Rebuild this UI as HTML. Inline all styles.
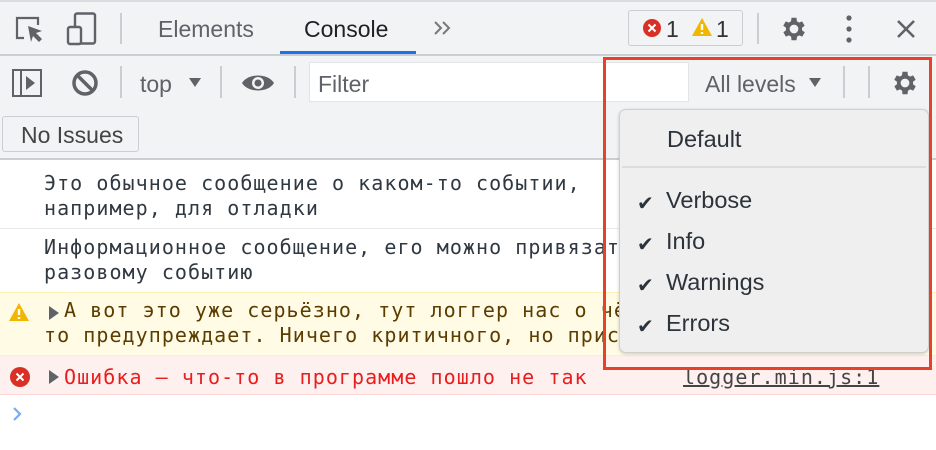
<!DOCTYPE html>
<html><head><meta charset="utf-8"><style>
*{box-sizing:border-box;margin:0;padding:0}
body{width:936px;height:450px;overflow:hidden;background:#fff;font-family:"Liberation Sans",sans-serif;position:relative;color:#333}
.abs{position:absolute}
.bar1{left:0;top:0;width:936px;height:56px;background:#f1f3f4;border-top:2px solid #dadce0;border-bottom:2px solid #cbcdd1}
.bar2{left:0;top:56px;width:936px;height:104px;background:#f1f3f4;border-bottom:2px solid #cbcdd1}
.sep{width:2px;background:#cbcdd1}
.t{font-size:23px;color:#5f6368}
.mono{font-family:"DejaVu Sans Mono",monospace;font-size:20px;letter-spacing:1.05px;line-height:25px;color:#303942}
.menu{font-size:23.5px;color:#2d333a}
.ck{position:absolute;left:-29px;top:4px;font-size:20px}
</style></head><body>
<div class="abs bar1"></div>
<div class="abs bar2"></div>
<svg class="abs" style="left:14px;top:14px" width="32" height="32" viewBox="0 0 32 32"><path d="M10 24H3V4h21v7" fill="none" stroke="#5f6368" stroke-width="2.2"/><path d="M14 12l14 5-6 2 6 6-3 3-6-6-2 6z" fill="#5f6368"/></svg>
<svg class="abs" style="left:66px;top:12px" width="34" height="34" viewBox="0 0 34 34"><rect x="9" y="1.5" width="20" height="30" rx="2" fill="none" stroke="#5f6368" stroke-width="2.4"/><rect x="2" y="15" width="13" height="17" rx="2" fill="#f1f3f4" stroke="#5f6368" stroke-width="2.4"/></svg>
<div class="abs sep" style="left:120px;top:13px;height:31px"></div>
<div class="abs t" style="left:158px;top:16px">Elements</div>
<div class="abs t" style="left:304px;top:16px;color:#202124">Console</div>
<div class="abs" style="left:280px;top:51px;width:136px;height:3px;background:#1a73e8"></div>
<svg class="abs" style="left:433px;top:20px" width="20" height="16"><path d="M2 2l6 6-6 6M10 2l6 6-6 6" fill="none" stroke="#777" stroke-width="2"/></svg>
<div class="abs" style="left:628px;top:10px;width:115px;height:36px;border:1.5px solid #cbcdd1;border-radius:3px"></div>
<svg class="abs" style="left:642px;top:18px" width="20" height="20"><circle cx="10" cy="10" r="9" fill="#d93025"/><path d="M6.5 6.5l7 7M13.5 6.5l-7 7" stroke="#fff" stroke-width="2"/></svg>
<div class="abs t" style="left:666px;top:16px;color:#333">1</div>
<svg class="abs" style="left:691px;top:17px" width="22" height="20"><path d="M11 1L21 19H1z" fill="#f2b600"/><path d="M11 7v6M11 15v2" stroke="#fff" stroke-width="2.4"/></svg>
<div class="abs t" style="left:716px;top:16px;color:#333">1</div>
<div class="abs sep" style="left:757px;top:13px;height:31px"></div>
<svg class="abs" style="left:779px;top:14px" width="30" height="30" viewBox="0 0 24 24"><path fill="#5f6368" d="M19.4 13a7.5 7.5 0 000-2l2.1-1.6-2-3.5-2.5 1a7.3 7.3 0 00-1.700-1L15 3h-4l-.4 2.9a7.3 7.3 0 00-1.7 1l-2.5-1-2 3.5L6.6 11a7.5 7.5 0 000 2l-2.1 1.6 2 3.5 2.5-1c.5.4 1.1.7 1.7 1L11 21h4l.4-2.9c.6-.3 1.2-.6 1.7-1l2.5 1 2-3.5zM13 15.5a3.5 3.5 0 110-7 3.5 3.5 0 010 7z" transform="translate(-1 0)"/></svg>
<svg class="abs" style="left:844px;top:14px" width="10" height="30"><circle cx="5" cy="4" r="2.6" fill="#5f6368"/><circle cx="5" cy="15" r="2.6" fill="#5f6368"/><circle cx="5" cy="26" r="2.6" fill="#5f6368"/></svg>
<svg class="abs" style="left:896px;top:19px" width="20" height="20"><path d="M2 2l16 16M18 2L2 18" stroke="#5f6368" stroke-width="2.6"/></svg>
<svg class="abs" style="left:12px;top:69px" width="30" height="28"><rect x="1" y="1" width="28" height="26" fill="none" stroke="#5f6368" stroke-width="2"/><path d="M9 1v26" stroke="#5f6368" stroke-width="2"/><path d="M14 7l9 7-9 7z" fill="#5f6368"/></svg>
<svg class="abs" style="left:71px;top:69px" width="28" height="28"><circle cx="14" cy="14" r="11" fill="none" stroke="#5f6368" stroke-width="3.5"/><path d="M6 6l16 16" stroke="#5f6368" stroke-width="3.5"/></svg>
<div class="abs sep" style="left:120px;top:66px;height:32px"></div>
<div class="abs t" style="left:140px;top:71px">top</div>
<svg class="abs" style="left:188px;top:77px" width="14" height="11"><path d="M1 1h12L7 10z" fill="#5f6368"/></svg>
<div class="abs sep" style="left:220px;top:66px;height:32px"></div>
<svg class="abs" style="left:241px;top:71px" width="34" height="24"><path d="M1 12C7 2 27 2 33 12 27 22 7 22 1 12z" fill="#5f6368"/><circle cx="17" cy="12" r="6" fill="#f1f3f4"/><circle cx="17" cy="12" r="3.5" fill="#5f6368"/></svg>
<div class="abs sep" style="left:294px;top:66px;height:32px"></div>
<div class="abs" style="left:309px;top:62px;width:380px;height:40px;background:#fff;border:1px solid #e4e4e4"></div>
<div class="abs t" style="left:318px;top:71px">Filter</div>
<div class="abs t" style="left:705px;top:71px">All levels</div>
<svg class="abs" style="left:808px;top:77px" width="14" height="11"><path d="M1 1h12L7 10z" fill="#5f6368"/></svg>
<div class="abs sep" style="left:843px;top:66px;height:32px"></div>
<div class="abs sep" style="left:868px;top:66px;height:32px"></div>
<svg class="abs" style="left:890px;top:68px" width="30" height="30" viewBox="0 0 24 24"><path fill="#5f6368" d="M19.4 13a7.5 7.5 0 000-2l2.1-1.6-2-3.5-2.5 1a7.3 7.3 0 00-1.7-1L15 3h-4l-.4 2.9a7.3 7.3 0 00-1.7 1l-2.5-1-2 3.5L6.6 11a7.5 7.5 0 000 2l-2.1 1.6 2 3.5 2.5-1c.5.4 1.1.7 1.7 1L11 21h4l.4-2.9c.6-.3 1.2-.6 1.7-1l2.5 1 2-3.5zM13 15.5a3.5 3.5 0 110-7 3.5 3.5 0 010 7z" transform="translate(-1 0)"/></svg>
<div class="abs" style="left:2px;top:116px;width:137px;height:36px;border:1.5px solid #cbcdd1;border-radius:3px;background:#f1f3f4"></div>
<div class="abs t" style="left:21px;top:122px;color:#444">No Issues</div>
<div class="abs mono" style="left:44px;top:171px">Это обычное сообщение о каком-то событии,<br>например, для отладки</div>
<div class="abs" style="left:0;top:228px;width:936px;height:1px;background:#e8e8e8"></div>
<div class="abs mono" style="left:44px;top:235px;white-space:nowrap">Информационное сообщение, его можно привязать к<br>разовому событию</div>
<div class="abs" style="left:0;top:292px;width:936px;height:64px;background:#fffbe5;border-top:1px solid #fff0b3;border-bottom:1px solid #fff0b3"></div>
<svg class="abs" style="left:8px;top:302px" width="22" height="20"><path d="M11 1L21 19H1z" fill="#f2b600"/><path d="M11 7v6M11 15v2" stroke="#fff" stroke-width="2.4"/></svg>
<svg class="abs" style="left:49px;top:306px" width="10" height="14"><path d="M0 0l10 7-10 7z" fill="#5f6368"/></svg>
<div class="abs mono" style="left:64px;top:298px;color:#5c3c00;white-space:nowrap">А вот это уже серьёзно, тут логгер нас о чём-</div>
<div class="abs mono" style="left:44px;top:323px;color:#5c3c00;white-space:nowrap">то предупреждает. Ничего критичного, но присмотритесь</div>
<div class="abs" style="left:0;top:356px;width:936px;height:39px;background:#fff0f0;border-bottom:1px solid #ffd6d6"></div>
<svg class="abs" style="left:9px;top:366px" width="22" height="22"><circle cx="11" cy="11" r="10" fill="#d93025"/><path d="M7.5 7.5l7 7M14.5 7.5l-7 7" stroke="#fff" stroke-width="2"/></svg>
<svg class="abs" style="left:49px;top:370px" width="10" height="14"><path d="M0 0l10 7-10 7z" fill="#5f6368"/></svg>
<div class="abs mono" style="left:64px;top:365px;color:#e81d1d;white-space:nowrap">Ошибка — что-то в программе пошло не так</div>
<div class="abs mono" style="left:683px;top:365px;color:#444;text-decoration:underline">logger.min.js:1</div>
<svg class="abs" style="left:11px;top:405px" width="12" height="18"><path d="M3 3l6 6-6 6" fill="none" stroke="#7baaf7" stroke-width="2.2"/></svg>
<div class="abs" style="left:619px;top:109px;width:310px;height:244px;background:#efefef;border:1px solid #cfcfcf;border-radius:7px;box-shadow:0 1px 3px rgba(0,0,0,.2)"></div>
<div class="abs menu" style="left:667px;top:126px">Default</div>
<div class="abs" style="left:622px;top:166px;width:304px;height:2px;background:#dcdcdc"></div>
<div class="abs menu" style="left:666px;top:187px"><span class="ck">✔</span>Verbose</div>
<div class="abs menu" style="left:666px;top:228px"><span class="ck">✔</span>Info</div>
<div class="abs menu" style="left:666px;top:269px"><span class="ck">✔</span>Warnings</div>
<div class="abs menu" style="left:666px;top:310px"><span class="ck">✔</span>Errors</div>
<div class="abs" style="left:603px;top:57px;width:329px;height:313px;border:3.5px solid #e8412a"></div>
</body></html>
